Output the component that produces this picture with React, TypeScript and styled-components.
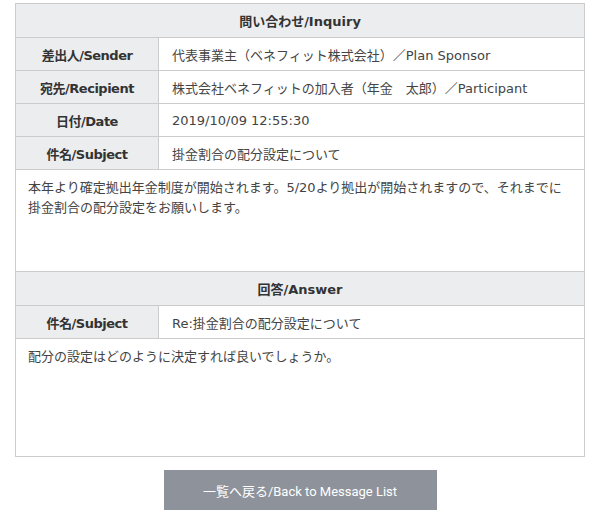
import React from "react";
import styled, { createGlobalStyle } from "styled-components";

const GlobalStyle = createGlobalStyle`
  html, body {
    margin: 0;
    padding: 0;
    background: #fff;
  }
  body {
    font-family: "DejaVu Sans", Verdana, "Noto Sans CJK JP", sans-serif;
    color: #333;
  }
`;

type Row = { label: string; value: string };

const inquiryRows: Row[] = [
  { label: "差出人/Sender", value: "代表事業主（ベネフィット株式会社）／Plan Sponsor" },
  { label: "宛先/Recipient", value: "株式会社ベネフィットの加入者（年金　太郎）／Participant" },
  { label: "日付/Date", value: "2019/10/09 12:55:30" },
  { label: "件名/Subject", value: "掛金割合の配分設定について" },
];

export default function App() {
  return (
    <Page>
      <GlobalStyle />
      <MessageTable>
        <colgroup>
          <LabelCol />
          <col />
        </colgroup>
        <tbody>
          <tr>
            <SectionHead colSpan={2}>問い合わせ/Inquiry</SectionHead>
          </tr>
          {inquiryRows.map((row) => (
            <tr key={row.label}>
              <Label>{row.label}</Label>
              <Value>{row.value}</Value>
            </tr>
          ))}
          <tr>
            <Body colSpan={2} $height={103}>
              本年より確定拠出年金制度が開始されます。5/20より拠出が開始されますので、それまでに掛金割合の配分設定をお願いします。
            </Body>
          </tr>
          <tr>
            <SectionHead colSpan={2}>回答/Answer</SectionHead>
          </tr>
          <tr>
            <Label>件名/Subject</Label>
            <Value>Re:掛金割合の配分設定について</Value>
          </tr>
          <tr>
            <Body colSpan={2} $height={119}>
              配分の設定はどのように決定すれば良いでしょうか。
            </Body>
          </tr>
        </tbody>
      </MessageTable>
      <Actions>
        <BackButton type="button">一覧へ戻る/Back to Message List</BackButton>
      </Actions>
    </Page>
  );
}

const Page = styled.div`
  padding: 3px 15px 0 15px;
  width: 600px;
  box-sizing: border-box;
`;

const MessageTable = styled.table`
  width: 570px;
  border-collapse: collapse;
  table-layout: fixed;
  font-size: 13px;
`;

const LabelCol = styled.col`
  width: 143px;
`;

const SectionHead = styled.th`
  height: 33px;
  padding: 0;
  background: #ebedef;
  border: 1px solid #cccccc;
  font-weight: bold;
  text-align: center;
  vertical-align: middle;
  color: #333;
`;

const Label = styled.th`
  height: 32px;
  padding: 0;
  background: #ebedef;
  border: 1px solid #cccccc;
  font-weight: bold;
  letter-spacing: -0.5px;
  text-align: center;
  vertical-align: middle;
  color: #333;
  white-space: nowrap;
`;

const Value = styled.td`
  height: 32px;
  padding: 0 13px;
  border: 1px solid #cccccc;
  vertical-align: middle;
  color: #444;
  white-space: nowrap;
`;

const Body = styled.td<{ $height: number }>`
  height: ${(p) => p.$height - 1}px;
  padding: 8px 12px;
  box-sizing: border-box;
  border: 1px solid #cccccc;
  vertical-align: top;
  line-height: 20px;
  color: #444;
`;

const Actions = styled.div`
  display: flex;
  justify-content: center;
  padding-top: 13px;
`;

const BackButton = styled.button`
  width: 273px;
  height: 40px;
  border: none;
  background: #8e939b;
  color: #fff;
  font-family: Roboto, "Noto Sans CJK JP", sans-serif;
  font-size: 13px;
  cursor: pointer;
`;
